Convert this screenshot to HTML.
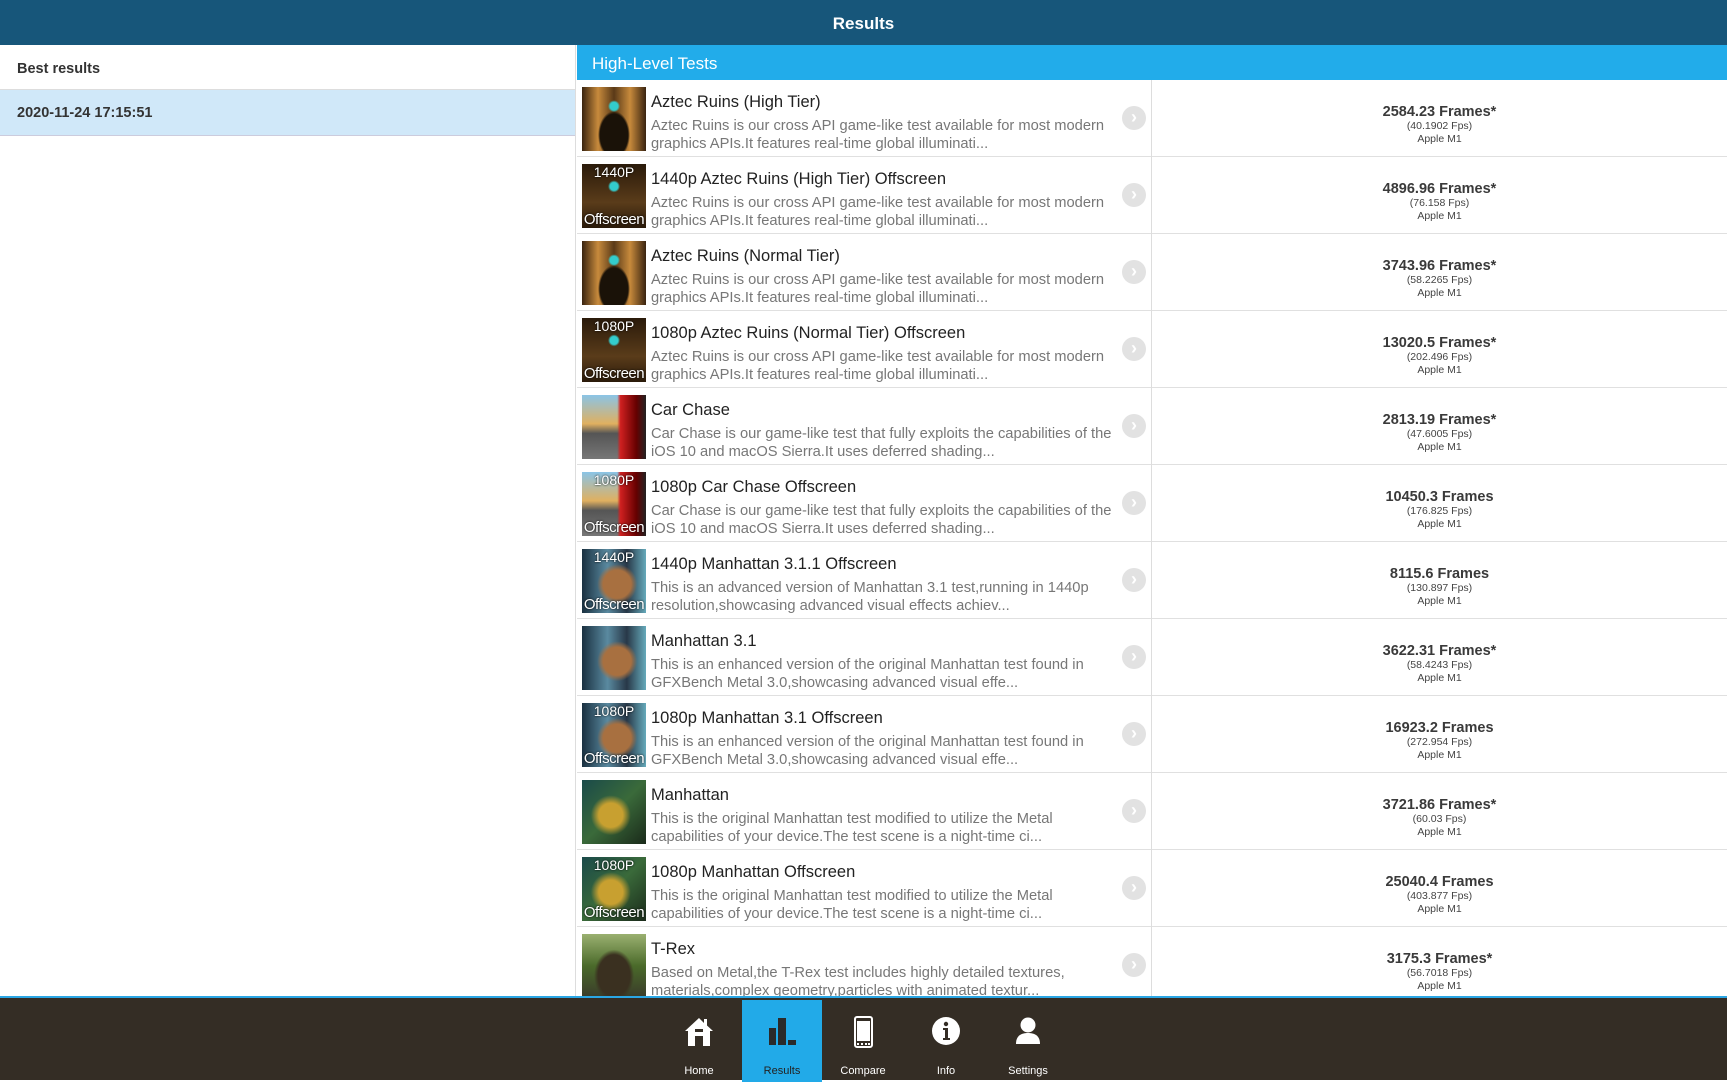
<!DOCTYPE html>
<html><head><meta charset="utf-8"><style>
*{margin:0;padding:0;box-sizing:border-box}
body{width:1727px;height:1080px;overflow:hidden;background:#fff;font-family:"Liberation Sans",sans-serif;position:relative}
.top{position:absolute;left:0;top:0;width:1727px;height:45px;background:#17567a;color:#fff;font-weight:bold;font-size:17px;text-align:center;line-height:47px}
.left{position:absolute;left:0;top:45px;width:576px;height:952px;background:#fff;border-right:1px solid #ddd}
.lh{height:45px;line-height:48px;padding-left:17px;font-weight:bold;font-size:14.5px;color:#333;border-bottom:1px solid #ddd}
.ls{height:46px;line-height:47px;padding-left:17px;font-weight:bold;font-size:14.5px;color:#333;background:#d0e8f9;border-bottom:1px solid #ccd}
.hdr{position:absolute;left:577px;top:45px;width:1150px;height:35px;background:#22acea;color:#fff;font-size:17px;line-height:37px;padding-left:15px}
.row{position:absolute;left:577px;width:1150px;height:77px;border-bottom:1.5px solid #e0e0e0;background:#fff}
.th{position:absolute;left:5px;top:7px;width:64px;height:64px;overflow:hidden;color:#fff;font-size:14px}
.th .a{position:absolute;top:0;left:0;width:64px;text-align:center;line-height:16px;text-shadow:0 0 2px #000}
.th .b{position:absolute;bottom:0;left:0;width:64px;text-align:center;line-height:16px;font-size:15px;letter-spacing:-0.5px;text-shadow:0 0 2px #000}
.t{position:absolute;left:74px;top:11px;font-size:16.5px;color:#222;line-height:22px}
.d{position:absolute;left:74px;top:38px;width:468px;font-size:14.7px;color:#777;line-height:17.6px}
.ch{position:absolute;left:545px;top:26px;width:24px;height:24px;border-radius:50%;background:#e2e2e2;color:#fff;font-size:18px;font-weight:bold;text-align:center;line-height:23px}
.dv{position:absolute;left:574px;top:0;width:1px;height:77px;background:#ddd}
.sc{position:absolute;left:575px;width:575px;top:24px;text-align:center;color:#444;line-height:12.5px}
.sc b{display:block;font-size:14.5px;line-height:16px;color:#3a3a3a}
.sc span{display:block;font-size:10.5px}
.bot{position:absolute;left:0;top:996px;width:1727px;height:84px;background:#342d25;border-top:2px solid #2aa6e4}
.tab{position:absolute;top:2px;width:80px;height:82px;text-align:center;color:#fff;font-size:11px}
.tab .l{position:absolute;bottom:5px;width:100%}
.tab svg{position:absolute;left:25px;top:16px}
.az{background:radial-gradient(circle at 50% 30%,#3cc 0 4px,transparent 6px),radial-gradient(ellipse at 50% 75%,#1a1208 0 14px,transparent 16px),linear-gradient(90deg,#3a2410,#c78a3c 25%,#5a3a18 50%,#c78a3c 75%,#3a2410)}
.az2{background:radial-gradient(circle at 50% 35%,#3cc 0 4px,transparent 6px),linear-gradient(#2a1a0a,#5a3c1a 60%,#2a1a0a)}
.cc{background:linear-gradient(90deg,transparent 55%,#d02020 60%,#600 85%,#222 100%),linear-gradient(#8bc4e6,#e0b060 45%,#555 60%,#777)}
.mh{background:radial-gradient(ellipse at 55% 55%,#a87040 0 14px,transparent 20px),linear-gradient(90deg,#1a3040,#5a8aa0 40%,#283848 70%,#6ab)}
.mo{background:radial-gradient(ellipse at 45% 55%,#c8a030 0 12px,transparent 20px),linear-gradient(135deg,#1a4a4a,#3a6a3a 50%,#1a2a1a)}
.tr{background:radial-gradient(ellipse at 50% 65%,#3a3020 0 16px,transparent 20px),linear-gradient(#9ab070,#4a6a2a 50%,#3a3a2a)}
</style></head><body>
<div class="top">Results</div>
<div class="left"><div class="lh">Best results</div><div class="ls">2020-11-24 17:15:51</div></div>
<div class="hdr">High-Level Tests</div>

<div class="row" style="top:80px"><div class="th az"></div><div class="t">Aztec Ruins (High Tier)</div><div class="d">Aztec Ruins is our cross API game-like test available for most modern graphics APIs.It features real-time global illuminati...</div><div class="ch">›</div><div class="dv"></div><div class="sc"><b>2584.23 Frames*</b><span>(40.1902 Fps)</span><span>Apple M1</span></div></div>
<div class="row" style="top:157px"><div class="th az2"><div class="a">1440P</div><div class="b">Offscreen</div></div><div class="t">1440p Aztec Ruins (High Tier) Offscreen</div><div class="d">Aztec Ruins is our cross API game-like test available for most modern graphics APIs.It features real-time global illuminati...</div><div class="ch">›</div><div class="dv"></div><div class="sc"><b>4896.96 Frames*</b><span>(76.158 Fps)</span><span>Apple M1</span></div></div>
<div class="row" style="top:234px"><div class="th az"></div><div class="t">Aztec Ruins (Normal Tier)</div><div class="d">Aztec Ruins is our cross API game-like test available for most modern graphics APIs.It features real-time global illuminati...</div><div class="ch">›</div><div class="dv"></div><div class="sc"><b>3743.96 Frames*</b><span>(58.2265 Fps)</span><span>Apple M1</span></div></div>
<div class="row" style="top:311px"><div class="th az2"><div class="a">1080P</div><div class="b">Offscreen</div></div><div class="t">1080p Aztec Ruins (Normal Tier) Offscreen</div><div class="d">Aztec Ruins is our cross API game-like test available for most modern graphics APIs.It features real-time global illuminati...</div><div class="ch">›</div><div class="dv"></div><div class="sc"><b>13020.5 Frames*</b><span>(202.496 Fps)</span><span>Apple M1</span></div></div>
<div class="row" style="top:388px"><div class="th cc"></div><div class="t">Car Chase</div><div class="d">Car Chase is our game-like test that fully exploits the capabilities of the iOS 10 and macOS Sierra.It uses deferred shading...</div><div class="ch">›</div><div class="dv"></div><div class="sc"><b>2813.19 Frames*</b><span>(47.6005 Fps)</span><span>Apple M1</span></div></div>
<div class="row" style="top:465px"><div class="th cc"><div class="a">1080P</div><div class="b">Offscreen</div></div><div class="t">1080p Car Chase Offscreen</div><div class="d">Car Chase is our game-like test that fully exploits the capabilities of the iOS 10 and macOS Sierra.It uses deferred shading...</div><div class="ch">›</div><div class="dv"></div><div class="sc"><b>10450.3 Frames</b><span>(176.825 Fps)</span><span>Apple M1</span></div></div>
<div class="row" style="top:542px"><div class="th mh"><div class="a">1440P</div><div class="b">Offscreen</div></div><div class="t">1440p Manhattan 3.1.1 Offscreen</div><div class="d">This is an advanced version of Manhattan 3.1 test,running in 1440p resolution,showcasing advanced visual effects achiev...</div><div class="ch">›</div><div class="dv"></div><div class="sc"><b>8115.6 Frames</b><span>(130.897 Fps)</span><span>Apple M1</span></div></div>
<div class="row" style="top:619px"><div class="th mh"></div><div class="t">Manhattan 3.1</div><div class="d">This is an enhanced version of the original Manhattan test found in GFXBench Metal 3.0,showcasing advanced visual effe...</div><div class="ch">›</div><div class="dv"></div><div class="sc"><b>3622.31 Frames*</b><span>(58.4243 Fps)</span><span>Apple M1</span></div></div>
<div class="row" style="top:696px"><div class="th mh"><div class="a">1080P</div><div class="b">Offscreen</div></div><div class="t">1080p Manhattan 3.1 Offscreen</div><div class="d">This is an enhanced version of the original Manhattan test found in GFXBench Metal 3.0,showcasing advanced visual effe...</div><div class="ch">›</div><div class="dv"></div><div class="sc"><b>16923.2 Frames</b><span>(272.954 Fps)</span><span>Apple M1</span></div></div>
<div class="row" style="top:773px"><div class="th mo"></div><div class="t">Manhattan</div><div class="d">This is the original Manhattan test modified to utilize the Metal capabilities of your device.The test scene is a night-time ci...</div><div class="ch">›</div><div class="dv"></div><div class="sc"><b>3721.86 Frames*</b><span>(60.03 Fps)</span><span>Apple M1</span></div></div>
<div class="row" style="top:850px"><div class="th mo"><div class="a">1080P</div><div class="b">Offscreen</div></div><div class="t">1080p Manhattan Offscreen</div><div class="d">This is the original Manhattan test modified to utilize the Metal capabilities of your device.The test scene is a night-time ci...</div><div class="ch">›</div><div class="dv"></div><div class="sc"><b>25040.4 Frames</b><span>(403.877 Fps)</span><span>Apple M1</span></div></div>
<div class="row" style="top:927px"><div class="th tr"></div><div class="t">T-Rex</div><div class="d">Based on Metal,the T-Rex test includes highly detailed textures, materials,complex geometry,particles with animated textur...</div><div class="ch">›</div><div class="dv"></div><div class="sc"><b>3175.3 Frames*</b><span>(56.7018 Fps)</span><span>Apple M1</span></div></div>

<div class="bot">
<div class="tab" style="left:659px"><svg width="30" height="32" viewBox="0 0 30 32"><path d="M15 2 L1 15 L4 15 L4 30 L11 30 L11 20 L19 20 L19 30 L26 30 L26 15 L29 15 L23 9.5 L23 3 L20 3 L20 7 Z" fill="#fff"/><rect x="11" y="13" width="8" height="3" fill="#342d25"/></svg><div class="l">Home</div></div>
<div class="tab" style="left:742px;background:#22aae8;color:#222"><svg width="30" height="32" viewBox="0 0 30 32"><rect x="2" y="12" width="7" height="17" fill="#2a2a2a"/><rect x="11" y="2" width="8" height="27" fill="#2a2a2a"/><rect x="21" y="24" width="8" height="5" fill="#2a2a2a"/></svg><div class="l">Results</div></div>
<div class="tab" style="left:823px"><svg width="30" height="32" viewBox="0 0 30 32"><rect x="7" y="1" width="17" height="30" rx="2" fill="none" stroke="#fff" stroke-width="2"/><rect x="9" y="5" width="13" height="20" fill="#fff"/><rect x="9" y="27" width="2" height="2" fill="#fff"/><rect x="13" y="27" width="2" height="2" fill="#fff"/><rect x="17" y="27" width="2" height="2" fill="#fff"/><rect x="20" y="27" width="2" height="2" fill="#fff"/></svg><div class="l">Compare</div></div>
<div class="tab" style="left:906px"><svg width="30" height="32" viewBox="0 0 30 32"><circle cx="15" cy="15" r="14" fill="#fff"/><circle cx="15" cy="8" r="2.2" fill="#342d25"/><path d="M12 12h5v10h2v2h-7v-2h2v-8h-2z" fill="#342d25"/></svg><div class="l">Info</div></div>
<div class="tab" style="left:988px"><svg width="30" height="32" viewBox="0 0 30 32"><circle cx="15" cy="9" r="7.5" fill="#fff"/><path d="M3 28 C3 19 9 17 15 17 C21 17 27 19 27 28 Z" fill="#fff"/></svg><div class="l">Settings</div></div>
</div>
</body></html>
